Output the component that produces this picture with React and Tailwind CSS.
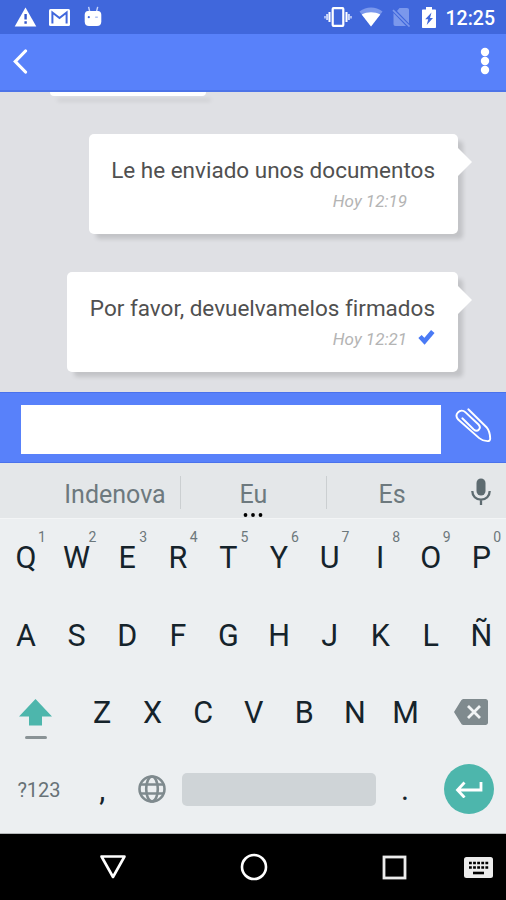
import React, { useState } from "react";

const topRow = ["Q", "W", "E", "R", "T", "Y", "U", "I", "O", "P"];
const homeRow = ["A", "S", "D", "F", "G", "H", "J", "K", "L", "Ñ"];
const bottomRow = ["Z", "X", "C", "V", "B", "N", "M"];

const StatusBar = () => (
  <div className="flex h-[34px] shrink-0 items-center justify-between bg-[#4067dc] pl-[14px] pr-[11px] text-white">
    <div className="flex items-center">
      <svg width="23" height="20" viewBox="0 0 23 20">
        <path d="M11.5 0.5 22.3 19.5H0.7z" fill="white" />
        <path d="M10.4 7h2.4v5.6h-2.4zM10.4 14.3h2.4v2.4h-2.4z" fill="#3558cc" />
      </svg>
      <svg width="21" height="17" viewBox="0 0 21 17" className="ml-[12px]">
        <rect width="21" height="17" rx="1.5" fill="white" />
        <path d="M3.4 14.5V3.5l7.1 5.6 7.1-5.6v11" fill="none" stroke="#4067dc" strokeWidth="2" />
      </svg>
      <svg width="18" height="21" viewBox="0 0 18 21" className="-mt-[2px] ml-[14px]">
        <path d="M4.6 0.8 5.8 6M13.7 0.8 12.4 6" stroke="#c9d6fb" strokeWidth="1.4" />
        <path d="M4 5h10c2 0 3.3 1.5 3.3 4v6.5c0 3-1.6 4.5-4.3 4.5H5c-2.7 0-4.3-1.5-4.3-4.5V9c0-2.5 1.3-4 3.3-4z" fill="white" />
        <circle cx="4.8" cy="11.2" r="1.1" fill="#4067dc" />
        <path d="M11.2 11.2h2.6" stroke="#9db4f2" strokeWidth="1.3" />
      </svg>
    </div>
    <div className="flex items-center">
      <svg width="28" height="20" viewBox="0 0 28 20">
        <rect x="8.7" y="1.2" width="10.6" height="17.6" rx="0.8" fill="none" stroke="white" strokeWidth="2.2" />
        <path d="M5.5 5v10M22.5 5v10" stroke="white" strokeWidth="2" />
        <path d="M3.2 7v6M24.8 7v6" stroke="#c9d6fb" strokeWidth="2.2" />
        <path d="M1 9v2.5M27 9v2.5" stroke="#c9d6fb" strokeWidth="1.5" />
      </svg>
      <svg width="24" height="20" viewBox="0 0 24 20" className="ml-[7px]">
        <path d="M12 19.5 0.5 4.5C4 1.8 8 0.5 12 0.5s8 1.3 11.5 4z" fill="#7b98ec" />
        <path d="M12 19.5 2.7 7.5C5.5 6 8.7 5.2 12 5.2s6.5.8 9.3 2.3z" fill="white" />
      </svg>
      <svg width="19" height="20" viewBox="0 0 19 20" className="ml-[9px]">
        <path d="M7.5 1H15c1.3 0 2 .7 2 2v13.5L5 4zM1.5 6 14 19H3.5c-1.3 0-2-.7-2-2z" fill="#7b98ec" />
        <path d="M1 3.2 17.5 19.5" stroke="#7b98ec" strokeWidth="1.7" />
      </svg>
      <svg width="14" height="21" viewBox="0 0 14 21" className="ml-[11px]">
        <path d="M4 0h6v2.5h3c.6 0 1 .4 1 1V20c0 .6-.4 1-1 1H1c-.6 0-1-.4-1-1V3.5c0-.6.4-1 1-1h3z" fill="white" />
        <path d="M9.5 5.5 3.2 12.3h3L4.7 18l6.3-7H8z" fill="#4067dc" />
      </svg>
      <span className="ml-[10px] mt-[3px] text-[19.5px] font-medium leading-none">12:25</span>
    </div>
  </div>
);

const AppBar = () => (
  <div className="flex h-[58px] shrink-0 items-center justify-between border-b-2 border-[#4d74e8] bg-[#5881fa] pl-[13px] pr-[16px]">
    <button className="-mt-[2px]">
      <svg width="15" height="25" viewBox="0 0 15 25">
        <path d="M12.5 2 2.3 12.5 12.5 23" fill="none" stroke="white" strokeWidth="3.2" strokeLinecap="round" />
      </svg>
    </button>
    <button className="-mt-[2px]">
      <svg width="10" height="28" viewBox="0 0 10 28">
        <circle cx="5" cy="5" r="4.2" fill="white" />
        <circle cx="5" cy="14" r="4.2" fill="white" />
        <circle cx="5" cy="23" r="4.2" fill="white" />
      </svg>
    </button>
  </div>
);

const Message = ({ text, time, read }) => (
  <div className="relative flex h-[100px] flex-col items-end rounded-[5px] bg-white pl-[22.5px] pr-[23px] pt-[22px] shadow-[6px_6px_4px_-1px_rgba(0,0,0,0.13)]">
    <p className="whitespace-nowrap text-[22.5px] leading-[28px] text-[#505050] [font-variant-ligatures:none]">{text}</p>
    <div className="mt-[7px] flex items-center">
      <span className="text-[17px] italic leading-[20px] text-[#b4b4b4]">{time}</span>
      <div className="ml-[11px] w-[17px]">
        {read && (
          <svg width="17" height="16" viewBox="0 0 17 16" className="-mt-[4px]">
            <path d="M2 7.5 6.5 12.3 14.8 2.5" fill="none" stroke="#4a7af5" strokeWidth="4.6" />
          </svg>
        )}
      </div>
    </div>
    <svg width="15" height="28" viewBox="0 0 15 28" className="absolute left-full top-[14px] -ml-[1px]">
      <path d="M0 0h1l14 14-14 14H0z" fill="white" />
    </svg>
  </div>
);

const Key = ({ label, hint }) => (
  <button className="relative flex h-full flex-1 items-center justify-center pl-[1.5px] pt-[2px] text-[30.5px] leading-none text-[#15232b]">
    {label}
    {hint && <sup className="absolute left-[38px] top-[11px] text-[14px] leading-none text-[#6c777b]">{hint}</sup>}
  </button>
);

const Keyboard = () => (
  <div className="flex h-[315px] flex-col border-b border-[#b5b8b9] bg-[#eceff1]">
    <div className="flex h-[77.4px]">
      {topRow.map((letter, i) => (
        <Key key={letter} label={letter} hint={String((i + 1) % 10)} />
      ))}
    </div>
    <div className="flex h-[77.4px]">
      {homeRow.map((letter) => (
        <Key key={letter} label={letter} />
      ))}
    </div>
    <div className="flex h-[77.4px]">
      <button className="flex w-[76px] flex-col items-center pr-[5px] pt-[25px]">
        <svg width="33" height="27" viewBox="0 0 33 27">
          <path d="M16.5 0 33 17.5H23V26.5H10V17.5H0z" fill="#4db6ac" />
        </svg>
        <span className="mt-[10px] h-[3px] w-[22px] rounded-full bg-[#8a9396]" />
      </button>
      {bottomRow.map((letter) => (
        <Key key={letter} label={letter} />
      ))}
      <button className="flex w-[76px] items-center justify-center pl-[5px]">
        <svg width="34" height="26" viewBox="0 0 34 26">
          <path d="M9.5 0H31.5c1.5 0 2.5 1 2.5 2.5v21c0 1.5-1 2.5-2.5 2.5H9.5C8 26 7.5 25 6.8 24L0 13 6.8 2C7.5 1 8 0 9.5 0z" fill="#7f8a8e" />
          <path d="M14 7 26 19M26 7 14 19" stroke="#f1f4f5" strokeWidth="2.8" />
        </svg>
      </button>
    </div>
    <div className="flex h-[77.4px]">
      <button className="w-[77px] pl-[1px] text-[20px] text-[#677277]">?123</button>
      <button className="w-[50.6px] text-[30.5px] leading-none text-[#15232b]">,</button>
      <button className="flex w-[50px] items-center justify-center pb-[2px] pr-[2px]">
        <svg width="28" height="28" viewBox="0 0 28 28" fill="none" stroke="#7f8a8e" strokeWidth="2.6">
          <circle cx="14" cy="14" r="12.5" />
          <ellipse cx="14" cy="14" rx="5.8" ry="12.5" />
          <path d="M2.5 9.5h23M2.5 18.5h23" />
        </svg>
      </button>
      <div className="flex w-[202.4px] items-center pl-[4.5px] pr-[3.5px]">
        <div className="h-[33px] w-full rounded-[5px] bg-[#cfd4d7]" />
      </div>
      <button className="w-[50px] text-[30.5px] leading-none text-[#15232b]">.</button>
      <button className="flex flex-1 items-center justify-center pb-[1px] pl-[2px]">
        <span className="flex h-[50px] w-[50px] items-center justify-center rounded-full bg-[#4db6ac]">
          <svg width="28" height="18" viewBox="0 0 28 18">
            <path d="M26 2v8H3M9.5 2.500 2.500 10l7 7.500" fill="none" stroke="white" strokeWidth="2.8" />
          </svg>
        </span>
      </button>
    </div>
  </div>
);

const NavBar = () => (
  <div className="flex h-[66px] items-center bg-black pl-[99px]">
    <svg width="28" height="26" viewBox="0 0 28 26">
      <path d="M2.5 2.5h23L14 23z" fill="none" stroke="white" strokeWidth="2.6" strokeLinejoin="round" />
    </svg>
    <svg width="28" height="28" viewBox="0 0 28 28" className="ml-[113px]">
      <circle cx="14" cy="14" r="12" fill="none" stroke="white" strokeWidth="2.6" />
    </svg>
    <svg width="25" height="25" viewBox="0 0 25 25" className="ml-[114px]">
      <rect x="2" y="2" width="21" height="21" fill="none" stroke="#ececec" strokeWidth="2.8" />
    </svg>
    <svg width="29" height="21" viewBox="0 0 29 21" className="ml-[57px]">
      <rect width="29" height="21" rx="2.5" fill="#ececec" />
      <path d="M5 6h19.5M5 10.5h19.5" stroke="black" strokeWidth="2.6" strokeDasharray="2.8 1.3" />
      <path d="M9 16h11" stroke="black" strokeWidth="2.6" />
    </svg>
  </div>
);

const App = () => {
  const [draft, setDraft] = useState("");

  return (
    <div className="flex h-[900px] w-[506px] flex-col overflow-hidden bg-black font-['Roboto',sans-serif]">
      <StatusBar />
      <AppBar />

      <div className="flex h-[300px] shrink-0 flex-col items-end overflow-hidden bg-[#dfe0e4] pr-[48px]">
        <div className="mr-[252px] h-[4px] w-[156px] shrink-0 rounded-b-[5px] bg-white shadow-[6px_6px_4px_-1px_rgba(0,0,0,0.13)]" />
        <div className="mt-[38px]">
          <Message text="Le he enviado unos documentos" time="Hoy 12:19" />
        </div>
        <div className="mt-[38px]">
          <Message text="Por favor, devuelvamelos firmados" time="Hoy 12:21" read />
        </div>
      </div>

      <div className="flex h-[71px] shrink-0 items-center border-y border-[#4a72ec] bg-[#5881fa] pl-[21px]">
        <input
          type="text"
          className="mt-[4px] h-[49px] w-[420px] bg-white px-3 text-xl outline-none"
          onChange={(e) => setDraft(e.target.value)}
          value={draft}
        />
        <button className="-mt-[5px] ml-[14px]">
          <svg width="38" height="36" viewBox="0 0 38 36" fill="none" stroke="white" strokeWidth="1.9" strokeLinecap="round">
            <path d="M13.3 2.3 31.5 20.2c2.5 3 3.6 7.3 3.7 11.3 0 1.8-.9 2.7-2.7 2.6-3-.2-6-1-8.3-3L3.2 12.5C1.2 10.3 1 7.5 3 5.4s5-2.4 7.3-.3L23.5 17.5c1.6 1.7 1.7 3.7.4 5.1s-3.5 1.3-5.2-.1L7.3 11.3" />
          </svg>
        </button>
      </div>

      <div className="flex h-[56px] shrink-0 items-center border-b border-[#f3f5f6] bg-[#e4e7e9] text-[25px] text-[#6d797e]">
        <div className="w-[180px] pl-[50px] pt-[8px] text-center">Indenova</div>
        <div className="mt-[4px] h-[33px] w-px bg-[#cbcfd1]" />
        <div className="relative w-[145px] pt-[8px] text-center">
          Eu
          <svg width="22" height="4" viewBox="0 0 22 4" className="absolute left-[61px] top-[45px]">
            <circle cx="3.5" cy="2" r="1.9" />
            <circle cx="11" cy="2" r="1.9" />
            <circle cx="18.5" cy="2" r="1.9" />
          </svg>
        </div>
        <div className="mt-[4px] h-[33px] w-px bg-[#cbcfd1]" />
        <div className="w-[130px] pt-[8px] text-center">Es</div>
        <svg width="20" height="28" viewBox="0 0 20 28" className="ml-[14px] mt-[3px]" fill="none">
          <rect x="5.5" y="0.5" width="9" height="17" rx="4.5" fill="#5d6b70" />
          <path d="M1.3 13c0 5 3.7 8.7 8.7 8.7s8.7-3.7 8.7-8.7M10 21.7V27" stroke="#5d6b70" strokeWidth="2.3" />
        </svg>
      </div>

      <Keyboard />
      <NavBar />
    </div>
  );
};

export default App;
